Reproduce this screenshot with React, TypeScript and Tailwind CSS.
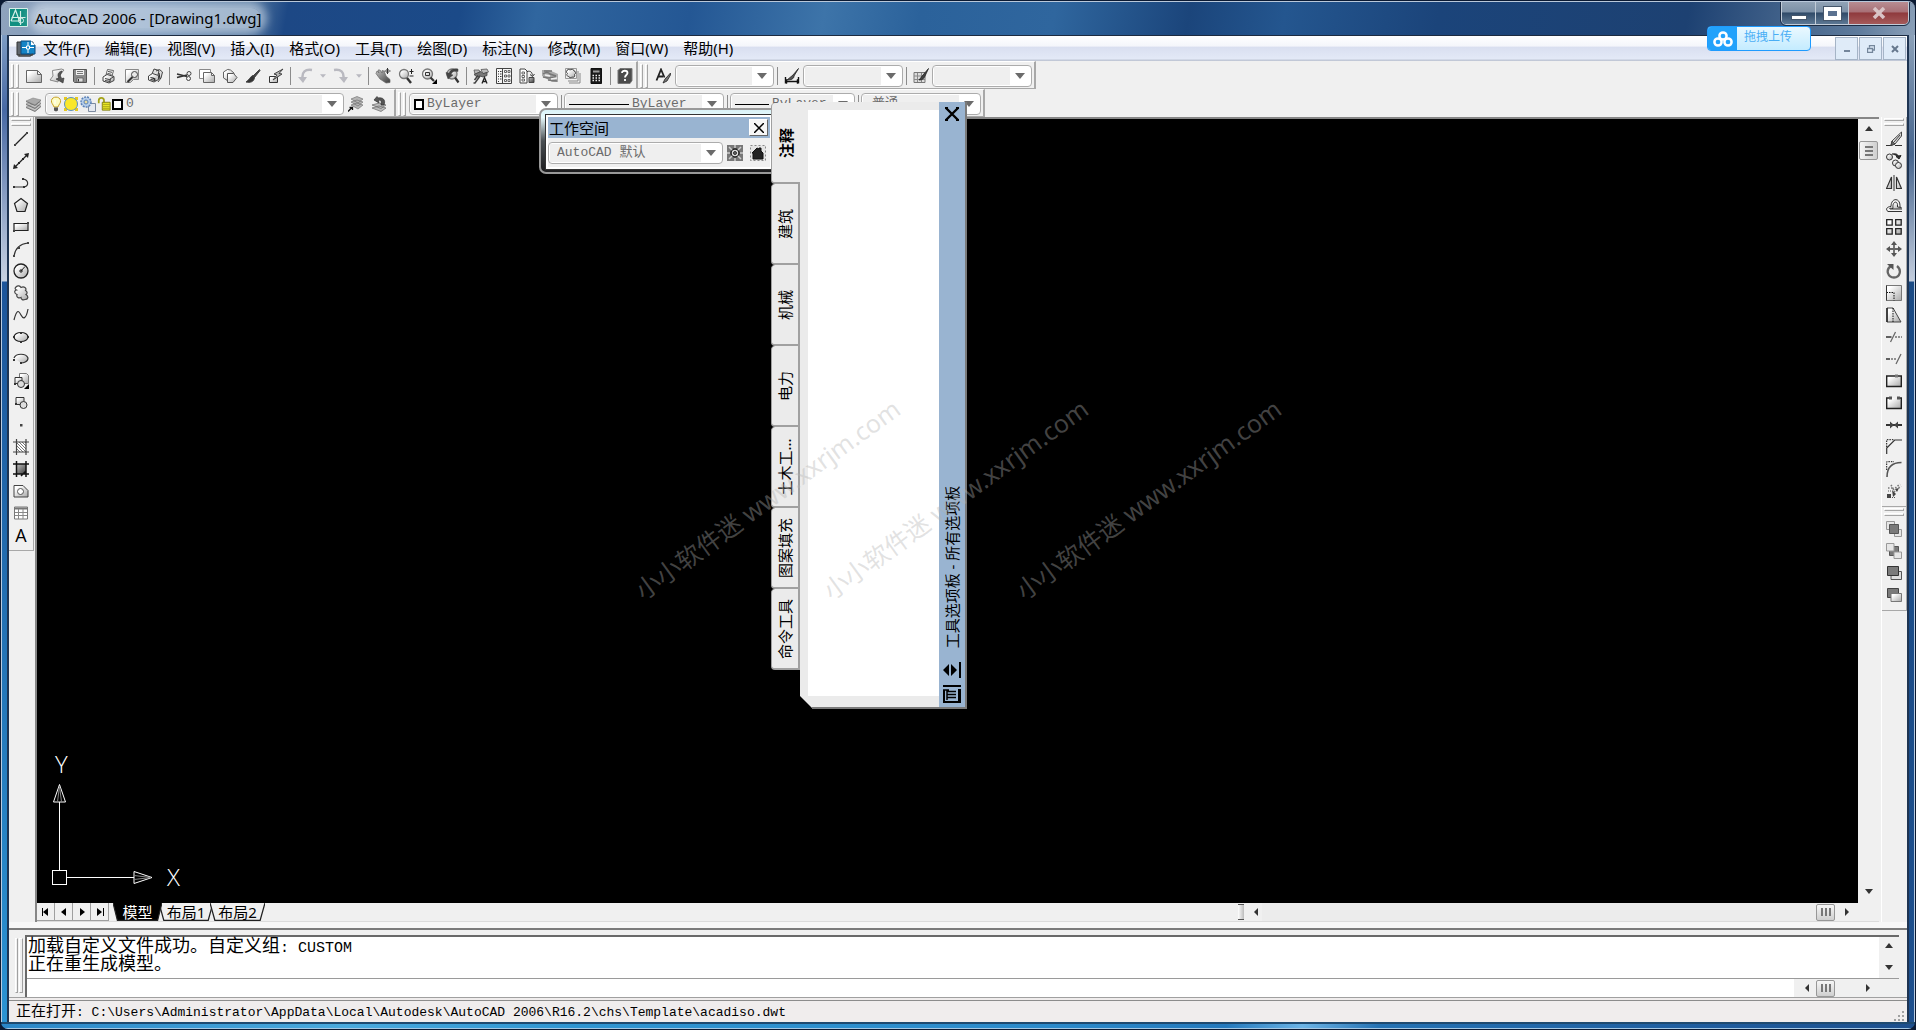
import type { ReactNode } from "react";

const ui = "font-['Noto_Sans','Noto_Sans_CJK_SC',sans-serif]";
const mono = "font-['Liberation_Mono','Noto_Sans_CJK_SC',monospace]";

function Defs() {
  return (
    <svg className="absolute h-0 w-0" aria-hidden="true">
      <defs>
        <linearGradient id="lg" x1="0" y1="0" x2="1" y2="1">
          <stop offset="0.2" stopColor="#ffffff" />
          <stop offset="1" stopColor="#a8a8a8" />
        </linearGradient>
        <linearGradient id="dg" x1="0" y1="0" x2="1" y2="1">
          <stop offset="0" stopColor="#c4c4c4" />
          <stop offset="1" stopColor="#3a3a3a" />
        </linearGradient>
        <pattern id="hatch" width="3" height="3" patternUnits="userSpaceOnUse">
          <path d="M0 0l3 3" stroke="#555" strokeWidth=".8" />
        </pattern>
      </defs>
    </svg>
  );
}

function Ic({ children, className = "h-4 w-4" }: { children: ReactNode; className?: string }) {
  return (
    <svg viewBox="0 0 16 16" fill="none" stroke="#444" strokeWidth="1" className={className} aria-hidden="true">
      {children}
    </svg>
  );
}

const LG = "url(#lg)";
const DG = "url(#dg)";

const icons: Record<string, ReactNode> = {
  新建: <path d="M1 2.500h10.500l4 4V14.500H.5V2.500zM11.500 2.500v4h4" fill={LG} stroke="#666" />,
  打开: (
    <>
      <path d="M3.500 2.500l9-1.500 2.500 1-5 6-1 6-8-2 3-4z" fill={LG} stroke="#888" />
      <path d="M13 3c-4 1-5 4-3 7l-3 1 7 4 1-5-2 .5c-2-2-2-4 0-6.500z" fill="#555" stroke="#333" strokeWidth=".6" />
    </>
  ),
  保存: (
    <>
      <path d="M1.500 1.500h13v13H2.500l-1-1z" fill="#8a8a8a" stroke="#555" />
      <path d="M4 2h8v5H4z" fill="#eee" stroke="none" />
      <path d="M5 3.500h6M5 5.500h6" stroke="#777" />
      <path d="M5 10h6v4H5z" fill="#ddd" stroke="#555" strokeWidth=".7" />
      <path d="M6.500 11v2.500" stroke="#333" />
    </>
  ),
  打印: (
    <>
      <path d="M5 7l1.500-5.500 6 1L11 8" fill="#fff" stroke="#666" />
      <path d="M2 9l4-2.500 7 2v4L8 15l-6-2z" fill={LG} />
      <path d="M4 10.500l6 1.500M4 12.500l5 1M13 8.500L9 11v3.500M7 3.500l4 .8M6.500 5.500l4 .8" />
    </>
  ),
  打印预览: (
    <>
      <path d="M1.500 1.500h13v10h-5l-3 3h-5z" fill={LG} stroke="#888" />
      <circle cx="10.500" cy="6.500" r="3" fill="#e8e8e8" stroke="#444" />
      <path d="M8.500 9L3.500 14" stroke="#333" strokeWidth="2" />
    </>
  ),
  发布: (
    <>
      <path d="M5 6l2-5 5 1.500L11 7M9 3l3.500-1.500L15.500 4 14 10l-3 4" fill="#ddd" />
      <path d="M1.500 8l4-2.500 6 2v4L7 14l-5.500-2z" fill={LG} />
      <path d="M3.500 9.500l5 1.500M3.500 11.500l5 1M8 12l-2-2.500M12 5l1 6" stroke="#222" />
    </>
  ),
  剪切: (
    <>
      <path d="M1 6l10 2.500M1 9.500l10-2.500" stroke="#333" strokeWidth="1.500" />
      <circle cx="13" cy="5.500" r="2" />
      <circle cx="12.500" cy="10.500" r="2" />
    </>
  ),
  复制: (
    <>
      <path d="M.5 1.500h11v9H.5z" fill="#fff" stroke="#888" />
      <path d="M4.500 4.500h8l3 3v7h-11zM12.500 4.500v3h3" fill={LG} stroke="#666" />
    </>
  ),
  粘贴: (
    <>
      <path d="M2 3.500h2l2-2.500 3 2.500 2 1v3M5 12.500L1.500 9z" fill="#ccc" stroke="#888" />
      <path d="M1.500 4l4-2.500 3 .5L12 5v5l-4 4-6.500-4z" fill={LG} stroke="#666" />
      <path d="M5.500 5.500h6l3.500 4-4 5H5.500z" fill={LG} stroke="#555" />
    </>
  ),
  特性匹配: (
    <>
      <path d="M14.500 1.500L8 8l1.500 1.500 5.500-7z" fill="#444" />
      <path d="M8 7.500c-3 1-3 4-7 6.500 4 1 8 0 8.500-4.500z" fill="#333" />
    </>
  ),
  块编辑器: (
    <>
      <path d="M1.500 8.500h8v6h-8z" fill="url(#lg)" stroke="#333" />
      <path d="M15 1L6 6l3 1-4 5 9-6-3-.5z" fill="#bbb" stroke="#444" />
    </>
  ),
  放弃: (
    <>
      <path d="M15 2C8 1 5 4 5.500 10" stroke="#b9b9c0" strokeWidth="2.500" />
      <path d="M1 9h9l-4 6z" fill="#b9b9c0" stroke="none" />
    </>
  ),
  重做: (
    <>
      <path d="M1 2c7-1 10 2 9.500 8" stroke="#b9b9c0" strokeWidth="2.500" />
      <path d="M6 9h9l-4 6z" fill="#b9b9c0" stroke="none" />
    </>
  ),
  实时平移: (
    <>
      <path d="M1 5.500L2 3l2 2-1-3h2l2 3V2.500l2 .5 2 5 4 3.500v3L11 15 5 11z" fill={DG} stroke="#666" strokeWidth=".7" />
      <path d="M12.500 0v6M9.500 3h6M11.500 1.500l1-1 1 1M11.500 4.500l1 1 1-1" stroke="#333" />
    </>
  ),
  实时缩放: (
    <>
      <circle cx="6" cy="6" r="4.500" fill={LG} stroke="#777" strokeWidth="1.300" />
      <path d="M9 10l4 5" stroke="#333" strokeWidth="2.400" />
      <path d="M13.500 1v5M11.500 3.500h4M11.500 8h4" stroke="#222" />
    </>
  ),
  窗口缩放: (
    <>
      <circle cx="6.500" cy="6" r="5" fill={LG} stroke="#777" strokeWidth="1.300" />
      <path d="M4.500 4.500h4v3h-4z" stroke="#333" />
      <path d="M9.500 9.500l3.500 3.500" stroke="#333" strokeWidth="2.200" />
      <path d="M16 11v5h-5z" fill="#000" stroke="none" />
    </>
  ),
  缩放上一个: (
    <>
      <circle cx="8" cy="6" r="5" fill={LG} stroke="#777" strokeWidth="1.300" />
      <path d="M11 9.500l3.500 5" stroke="#333" strokeWidth="2.200" />
      <path d="M14 1C9 0 6 2 5 5L2 4.500 4 11l5-4-2-.5c1-3 3-4 7-3z" fill="#444" strokeWidth=".5" />
    </>
  ),
  特性: (
    <>
      <path d="M1 2h5l1 2-5 2zM8 1.500l6-.5 1.500 3L10 6z" fill="#bbb" stroke="#555" strokeWidth=".8" />
      <path d="M1 6.500l7-3 2 2 4-1v3l-4 1.500-3-1-3 1z" fill="#777" stroke="#444" strokeWidth=".8" />
      <path d="M7 8l-5 7H.5M5 7.500L1.500 12" stroke="#444" strokeWidth="1.500" />
      <path d="M9 15.500l2.500-6 2.500 6M10 13.500h3" stroke="#222" strokeWidth="1.300" />
    </>
  ),
  设计中心: (
    <>
      <path d="M.5.5h15v15H.5z" fill="#f6f6f6" stroke="#444" />
      <path d="M6.500 1v14" />
      <path d="M2 3.500h1M4 3.500h1.500M2 6h1M4 6h1.500M2 8.500h1M4 8.500h1.500M2 11h1M4 11h1.500M2 13.500h1" stroke="#333" />
      <path d="M8.500 2.500h2v2h-2zM12 2.500h2v2h-2zM8.500 7h2v2h-2zM12 7h2v2h-2zM8.500 11.500h2v2h-2zM12 11.500h2v2h-2z" stroke="#666" />
    </>
  ),
  工具选项板: (
    <>
      <path d="M1 1h5l2 2v12H1z" fill="#fff" stroke="#444" />
      <path d="M3 4h2.500v2H3zM3 7.500h2.500v2H3zM3 11h2.500v2H3z" stroke="#666" />
      <path d="M8 3.500c4-1 5 1 5.500 4M11 6.500l2.500 2 2-2.500" stroke="#333" />
      <path d="M10 9.500h5v5h-5z" fill={DG} />
    </>
  ),
  图纸集: (
    <>
      <path d="M0 2h7l9 4v8H10L0 8z" fill="#aaa" stroke="none" />
      <path d="M1 6c3-2 5-2 7 0l6 2M2 3h8M1 9l5 1 8-1M6 12l9 1" stroke="#777" strokeWidth="1.500" />
      <path d="M3 7l5 1M9 11l6-1" stroke="#eee" strokeWidth="1.500" />
    </>
  ),
  标记集: (
    <>
      <path d="M4 15h11V5M3 13h10V3" stroke="#888" />
      <path d="M.5.5h11v10H.5z" fill="#eee" stroke="#999" />
      <path d="M2 3c0-2 2-2 3-1 1-1 4-1 4 1 2 0 2 3 .5 3.500 1 2-1 3.500-2.500 2.500-1 1-3 1-3-.5-2 0-3-2-1.500-3C1.500 5 1 3 2 3z" fill={LG} stroke="#444" />
    </>
  ),
  计算器: (
    <>
      <path d="M3 .5h10.500v15H3z" fill="#1a1a1a" stroke="#111" />
      <path d="M5 2.500h6.500v2H5z" fill="#9a9a9a" stroke="none" />
      <path d="M4.500 7.500h8M4.500 10h8M4.500 12.500h8" stroke="#eee" strokeWidth="1.300" strokeDasharray="1.500 1.500" />
    </>
  ),
  帮助: (
    <>
      <path d="M1 2.500L3 .5h12v12l-2 3H1z" fill="#4b4b4b" stroke="#777" />
      <path d="M5 5c0-3 5.500-3 5.500 0 0 2-2.500 2-2.500 4.500M8 11v2" stroke="#fff" strokeWidth="1.800" />
    </>
  ),
  文字样式: (
    <>
      <path d="M1.500 12.500L6 1.500l3.500 8M3 8.500h5" stroke="#222" strokeWidth="1.800" />
      <path d="M15.500 5L11 10l-1 1-2 4 4-2 4-7z" fill="#777" stroke="#222" strokeWidth=".8" />
    </>
  ),
  标注样式: (
    <>
      <path d="M1 13.500h14M1.500 9v6.500M14.500 9v6.500M3 11.500l-1.500 2L3 15.500M13 11.500l1.500 2-1.500 2" stroke="#111" strokeWidth="1.400" />
      <path d="M14.500.5L9 7l-6 5c4 0 7-1 7-4z" fill="#555" stroke="#222" strokeWidth=".8" />
    </>
  ),
  表格样式: (
    <>
      <path d="M1 4.500h11v10H1z" fill="#ddd" stroke="#777" />
      <path d="M1 8h11M1 11.500h11M4.500 5v9M8.500 5v9" stroke="#888" />
      <path d="M15.500.5L10 7l-4 5c4 0 5-2 6-4z" fill="#444" stroke="#222" strokeWidth=".8" />
    </>
  ),
  图层特性: (
    <>
      <path d="M0 11l7-3 8 2-6 5zM0 8l7-3 8 2-6 5z" fill="#c4c4c4" stroke="#888" strokeWidth=".6" />
      <path d="M0 5l7-3 8 2-6 5z" fill="#aaa" stroke="#888" strokeWidth=".6" />
      <path d="M0 5.500l9 4 6-5M0 8.500l9 4 6-5M0 11.500l9 4 6-5" stroke="#666" strokeWidth=".8" />
    </>
  ),
  置为当前: (
    <>
      <path d="M3 9l6-2 6 2-5 4zM3 6l6-2 6 2-5 4zM3 3l6-2.500L15 3l-5 4z" fill="#b4b4b4" stroke="#666" strokeWidth=".6" />
      <path d="M0 15.500l4-4M1.500 11.500H4.500V14" stroke="#111" strokeWidth="1.300" />
    </>
  ),
  上一个图层: (
    <>
      <path d="M1 12l7-2 7 2-5 3.500zM1 9l7-2 7 2-5 3.500z" fill="#bbb" stroke="#666" strokeWidth=".7" />
      <path d="M13 9c2-5-1-8-6-7L6 .5 3 4l5 3-.5-2.500c3-1 3 1 2.500 4.500z" fill="#555" stroke="#333" strokeWidth=".7" />
    </>
  ),
  直线: (
    <>
      <path d="M2 14L14 2" stroke="#222" strokeWidth="1.300" />
      <path d="M1 13h2v2H1zM13 1h2v2h-2z" fill="#444" stroke="none" />
    </>
  ),
  构造线: (
    <>
      <path d="M2 14L14 2" stroke="#222" strokeWidth="1.300" />
      <path d="M0 16l1-5 4 4zM16 0l-5 1 4 4zM5 9h2v2H5zM9 5h2v2H9z" fill="#222" stroke="none" />
    </>
  ),
  多段线: (
    <>
      <path d="M1 12h10c5-1 5-7-1-8" stroke="#333" strokeWidth="1.200" />
      <path d="M0 11h2v2H0zM10 11h2v2h-2zM9 3h2v2H9z" fill="#333" stroke="none" />
    </>
  ),
  正多边形: <path d="M8 1.500l6.500 5-2.500 8H4l-2.500-8z" fill={LG} stroke="#222" strokeWidth="1.200" />,
  矩形: (
    <>
      <path d="M1 4.500h14v7H1z" fill={LG} stroke="#222" strokeWidth="1.200" />
      <path d="M0 11h2v2H0zM14 3h2v2h-2z" fill="#444" stroke="none" />
    </>
  ),
  圆弧: (
    <>
      <path d="M1 15C2 9 5 3 15 2" stroke="#333" strokeWidth="1.200" />
      <path d="M0 14h2v2H0zM5 6h2v2H5zM14 1h2v2h-2z" fill="#444" stroke="none" />
    </>
  ),
  圆: (
    <>
      <circle cx="8" cy="8" r="7" fill={LG} stroke="#222" strokeWidth="1.300" />
      <path d="M8 8l4-4.500M7 7h2v2H7z" stroke="#222" />
    </>
  ),
  修订云线: (
    <path
      d="M3 2c2-2 4-1 5 .5C11 1 14 3 12.500 5.500c2 1 2 3 .5 4 3 2 2 5-1 5-2 1-4 0-4-2-2 1-5 0-4-3-3-1-3-4-.5-4.500C1.500 4 2 3 3 2z"
      fill={LG}
      stroke="#444"
      strokeWidth="1.200"
    />
  ),
  样条曲线: <path d="M1 13C4 1 6 4 8 8s5 5 7-6" stroke="#333" strokeWidth="1.200" />,
  椭圆: (
    <>
      <ellipse cx="8" cy="8" rx="7" ry="4.500" fill={LG} stroke="#222" strokeWidth="1.200" />
      <path d="M0 7h2v2H0zM14 7h2v2h-2zM7 3h2v2H7zM7 12h2v2H7z" fill="#333" stroke="none" />
    </>
  ),
  椭圆弧: (
    <>
      <path d="M1 7c2-5 12-5 14 0 0 4-5 5-7 5" fill={LG} stroke="#333" strokeWidth="1.200" />
      <path d="M0 8h2v2H0zM7 11h2v2H7z" fill="#333" stroke="none" />
    </>
  ),
  插入块: (
    <>
      <path d="M6.500.5h7l2 2v8h-9z" fill={LG} stroke="#777" />
      <path d="M2 4.500h7v6H2z" fill={LG} stroke="#333" />
      <circle cx="8" cy="11" r="3.500" fill="#ddd" stroke="#333" />
      <path d="M1 10h2v2H1z" fill="#333" stroke="none" />
      <path d="M16 11v5h-5z" fill="#000" stroke="none" />
    </>
  ),
  创建块: (
    <>
      <path d="M3 2.500h8v7H3z" fill={LG} stroke="#333" />
      <circle cx="10.500" cy="10" r="3.500" fill="#ddd" stroke="#333" />
      <path d="M2 8h2v2H2z" fill="#333" stroke="none" />
    </>
  ),
  点: <path d="M7 7h2.500v2.500H7z" fill="#444" stroke="none" />,
  图案填充: (
    <>
      <path d="M3 3h10v10H3z" fill="#fff" stroke="none" />
      <path d="M3 3h10v10H3z" fill="url(#hatch)" stroke="none" />
      <path d="M0 3h16M0 13h16M3.500 0v16M13 0v16" stroke="#444" strokeWidth="1.200" />
    </>
  ),
  渐变色: (
    <>
      <path d="M3 3h10v10H3z" fill="url(#dg)" stroke="none" />
      <path d="M0 3h16M0 13h16M3.500 0v16M13 0v16M8 15l5-5" stroke="#111" strokeWidth="1.500" />
    </>
  ),
  面域: (
    <>
      <path d="M1 2.500h9l5 5v6.500H1z" fill={LG} stroke="#444" />
      <circle cx="7.500" cy="8.500" r="3" fill="#fff" stroke="#555" />
    </>
  ),
  表格: (
    <>
      <path d="M1.500 2h13v12h-13z" fill="#fff" stroke="#777" />
      <path d="M1.500 3.500h13" stroke="#777" strokeWidth="2" />
      <path d="M2 7.500h12M2 10.500h12M5.500 4v10M10 4v10" stroke="#888" />
    </>
  ),
  删除: (
    <>
      <path d="M0 14.500h5M9 14.500h7" stroke="#333" />
      <path d="M15.500 1v4L9 13l-4 1.500 1-4.500z" fill={LG} stroke="#444" />
      <path d="M5 14.500l1-4.500 3 3zM8 11l6-7" stroke="#444" fill="#666" />
    </>
  ),
  复制对象: (
    <>
      <circle cx="3.500" cy="4" r="3" fill={LG} stroke="#333" />
      <circle cx="9.500" cy="10" r="3" fill={LG} stroke="#333" />
      <circle cx="12.500" cy="12.500" r="3" fill={LG} stroke="#333" />
      <path d="M6 1c4-.5 6 0 6.500 3M10 3.500l3 2.500 2-3.500z" stroke="#222" fill="#333" />
    </>
  ),
  镜像: (
    <>
      <path d="M5.500 2v11.500H.5z" fill={LG} stroke="#333" strokeWidth="1.200" />
      <path d="M10.500 2v11.500h5z" fill={LG} stroke="#333" strokeWidth="1.200" />
      <path d="M8 0v16" stroke="#333" />
    </>
  ),
  偏移: (
    <>
      <path d="M16 14.500H2c-3-2-1-5 3-5 0-9 9-9 9-1v2" stroke="#333" />
      <path d="M16 12H4c-1-1 0-1 3-.5-1-7 4-8 4.500-4v2.500l4 .5" stroke="#333" fill={LG} />
    </>
  ),
  阵列: <path d="M.7.7h5.500v5.500H.7zM9.700.7h5.500v5.500H9.700zM.7 9.700h5.500v5.500H.7zM9.700 9.700h5.500v5.500H9.700z" fill={LG} stroke="#222" strokeWidth="1.300" />,
  移动: (
    <>
      <path d="M8 2v12M2 8h12" stroke="#666" strokeWidth="1.800" />
      <path d="M8 0l3 4H5zM8 16l3-4H5zM0 8l4-3v6zM16 8l-4-3v6z" fill="#555" stroke="none" />
    </>
  ),
  旋转: (
    <>
      <path d="M5 3C-1 7 2 14.500 8 14.500S16 7 11 3" stroke="#666" strokeWidth="2.300" />
      <path d="M1 1h6.500v6z" fill="#555" stroke="none" />
    </>
  ),
  缩放对象: (
    <>
      <path d="M.5.5h15v15H.5z" fill={LG} stroke="#777" />
      <path d="M.5 7.500h7.500v8" stroke="#111" strokeDasharray="1.500 1" />
      <path d="M.5.5v15" stroke="#333" />
    </>
  ),
  拉伸: (
    <>
      <path d="M1 1h6l8 14H1z" fill={LG} stroke="#444" />
      <path d="M7 1v14" stroke="#111" strokeDasharray="1.500 1" />
      <path d="M1 1v14" stroke="#222" strokeWidth="1.500" />
    </>
  ),
  修剪: (
    <>
      <path d="M0 8h5.500" stroke="#222" strokeWidth="1.400" />
      <path d="M9 8h7" stroke="#333" strokeDasharray="2 1" />
      <path d="M4.500 13l5-10" stroke="#666" strokeWidth="1.300" />
    </>
  ),
  延伸: (
    <>
      <path d="M0 8h4" stroke="#222" strokeWidth="1.400" />
      <path d="M5 8h6" stroke="#333" strokeDasharray="2 1" />
      <path d="M10 13l5-10" stroke="#666" strokeWidth="1.300" />
    </>
  ),
  打断于点: (
    <>
      <path d="M.7 3h14.600v10.500H.7z" fill={LG} stroke="#222" strokeWidth="1.400" />
      <path d="M9 1.500h3v3H9z" fill="#777" stroke="none" />
    </>
  ),
  打断: (
    <>
      <path d="M1 3h14v10.500H1z" fill={LG} stroke="none" />
      <path d="M4 3H.7v10.500h14.600V3H12" stroke="#222" strokeWidth="1.400" />
      <path d="M3 1.500h3v3H3zM11 1.500h3v3h-3z" fill="#555" stroke="none" />
    </>
  ),
  合并: (
    <>
      <path d="M0 8h16" stroke="#333" strokeWidth="2" />
      <path d="M4 4.500L8 8l-4 3.500zM12 4.500L8 8l4 3.500z" fill="#444" stroke="none" />
    </>
  ),
  倒角: (
    <>
      <path d="M.7 15V9l8-8H16" stroke="#333" strokeWidth="1.200" />
      <path d="M.7 8V.7H8" stroke="#111" strokeDasharray="1.500 1" />
    </>
  ),
  圆角: (
    <>
      <path d="M1 16C1 6 6 1.500 15.500 1.500" stroke="#555" strokeWidth="1.600" />
      <path d="M.7 9V.7H8" stroke="#111" strokeDasharray="1.500 1" />
    </>
  ),
  分解: (
    <>
      <path d="M7 7l7-6M8 9l7-6M2 5h6M5 2l3 5" stroke="#777" strokeDasharray="1.500 1.500" strokeWidth="1.600" />
      <path d="M1 11h4v4H1zM6 7l4 4-3 3zM9 6l4-1-2 4z" fill="#444" stroke="none" />
      <path d="M6 14.500h4M2 8h4" stroke="#555" strokeDasharray="1 1" />
    </>
  ),
  前置: (
    <>
      <path d="M.5.5h8v8h-8zM8.500 8.500h7v7h-7z" fill="#e6e6e6" stroke="#999" />
      <path d="M3.500 3.500h9v9h-9z" fill="#7a7a7a" stroke="#555" />
    </>
  ),
  后置: (
    <>
      <path d="M3.500 3.500h9v9h-9z" fill="#7a7a7a" stroke="#555" />
      <path d="M.5.5h7.500v7.500H.5zM8 9h7.500v6.500H8z" fill="#e6e6e6" stroke="#999" />
    </>
  ),
  置于对象之上: (
    <>
      <path d="M5 6.500h10.500v8H5z" fill="#ddd" stroke="#555" />
      <path d="M1.500 1.500h11v9h-11z" fill="#7a7a7a" stroke="#333" />
    </>
  ),
  置于对象之下: (
    <>
      <path d="M1.500 1.500h11v9h-11z" fill="#7a7a7a" stroke="#444" />
      <path d="M5 6.500h10.500v8H5z" fill={LG} stroke="#777" />
    </>
  ),
  工作空间设置: (
    <>
      <path d="M0 0h16v16H0z" fill="#777" stroke="none" />
      <circle cx="8" cy="8" r="4" fill="#ddd" stroke="#222" strokeWidth="1.500" />
      <circle cx="8" cy="8" r="1.500" fill="#666" stroke="#333" />
      <path d="M8 0v3M8 13v3M0 8h3M13 8h3M2 2l3 3M14 2l-3 3M2 14l3-3M14 14l-3-3" stroke="#ccc" strokeWidth="1.500" />
    </>
  ),
  我的工作空间: (
    <>
      <path d="M.5.5h15v15H.5z" stroke="#888" strokeDasharray="2 2" fill="#e4e4e4" />
      <path d="M3 14V8H2l5-5 2 1V3h2v3l2 2v6z" fill="#222" stroke="#111" />
    </>
  ),
};

function Tool({ name }: { name: string }) {
  return (
    <button type="button" aria-label={name} className="flex h-[22px] w-[23px] shrink-0 items-center justify-center">
      <Ic>{icons[name]}</Ic>
    </button>
  );
}

function Sep() {
  return (
    <div className="flex w-[6px] shrink-0 justify-center">
      <div className="h-[18px] w-px bg-[#8c8c8c]" />
    </div>
  );
}

function Grip() {
  return (
    <div className="mr-[3px] ml-[2px] flex h-[24px] shrink-0 gap-[2px]">
      <div className="w-[3px] border border-t-white border-r-[#a5a5a5] border-b-[#a5a5a5] border-l-white" />
      <div className="w-[3px] border border-t-white border-r-[#a5a5a5] border-b-[#a5a5a5] border-l-white" />
    </div>
  );
}

function GripH() {
  return (
    <div className="mt-px flex w-[20px] flex-col gap-[2px]">
      <div className="h-[3px] border border-t-white border-r-[#a5a5a5] border-b-[#a5a5a5] border-l-white" />
      <div className="h-[3px] border border-t-white border-r-[#a5a5a5] border-b-[#a5a5a5] border-l-white" />
    </div>
  );
}

function Bar({ children }: { children: ReactNode }) {
  return (
    <div className="flex h-full items-center border-t border-r-2 border-b border-t-white border-r-[#a8a8a8] border-b-[#a8a8a8] pt-[2px]">
      <Grip />
      {children}
    </div>
  );
}

function Tri({ className = "h-[6px] w-[10px] fill-[#6b6b6b]", d = "M0 0h10L5 6z" }: { className?: string; d?: string }) {
  return (
    <svg viewBox="0 0 10 6" className={className} aria-hidden="true">
      <path d={d} />
    </svg>
  );
}

function Combo({ label, value = "", width, lead }: { label: string; value?: string; width: string; lead?: ReactNode }) {
  return (
    <div className={`flex h-[22px] shrink-0 items-stretch rounded-sm border border-[#acacac] bg-white p-px ${width}`}>
      <div className="flex min-w-0 flex-1 items-center bg-[#efefef] pl-[3px]">
        {lead}
        <select aria-label={label} className={`min-w-0 flex-1 appearance-none bg-transparent pl-[3px] text-[13px] text-[#6b6b6b] ${mono}`}>
          <option>{value}</option>
        </select>
      </div>
      <span className="flex w-[20px] items-center justify-center">
        <Tri />
      </span>
    </div>
  );
}

function LayerStates() {
  return (
    <div className="flex items-center gap-px">
      <svg viewBox="0 0 12 16" className="h-4 w-3" fill="none" aria-hidden="true">
        <path d="M4 11C3 8 1 7 1.500 4.500 2 0 10 0 10.500 4.500 11 7 9 8 8 11z" fill="#fdfcc4" stroke="#c9a227" />
        <path d="M4 11.500h4v3l-2 1-2-1z" fill="#555" />
        <path d="M5 4v4" stroke="#fff" />
      </svg>
      <svg viewBox="0 0 16 16" className="h-4 w-4" fill="none" aria-hidden="true">
        <path d="M1 1h3v3H1zM12 1h3v3h-3zM1 12h3v3H1zM12 12h3v3h-3z" fill="#e6c81e" />
        <circle cx="8" cy="8" r="6.500" fill="#fae72a" stroke="#5a8fbe" />
      </svg>
      <svg viewBox="0 0 16 16" className="h-4 w-4" fill="none" aria-hidden="true">
        <path d="M8.500 7.500h7v8h-7z" fill="#e4e8f0" stroke="#7d8ba0" />
        <circle cx="6" cy="6" r="5" fill="#b5cdea" stroke="#5b82b8" strokeWidth="1.500" strokeDasharray="2 1" />
        <circle cx="6" cy="6" r="2" fill="#e9dca0" stroke="#5b82b8" />
      </svg>
      <svg viewBox="0 0 16 16" className="h-4 w-[14px]" fill="none" aria-hidden="true">
        <path d="M2 7V4c0-4 6-4 6 0v3" stroke="#a5a31a" strokeWidth="2" />
        <path d="M6 6h9v9H6z" fill="#e8e524" stroke="#77750f" />
        <path d="M6 8.500h9M6 11h9M6 13h9" stroke="#a8a518" />
      </svg>
      <span className="h-[11px] w-[11px] border-2 border-black bg-white" />
    </div>
  );
}

const menus = ["文件(F)", "编辑(E)", "视图(V)", "插入(I)", "格式(O)", "工具(T)", "绘图(D)", "标注(N)", "修改(M)", "窗口(W)", "帮助(H)"];

const drawTools = [
  "直线", "构造线", "多段线", "正多边形", "矩形", "圆弧", "圆", "修订云线", "样条曲线", "椭圆",
  "椭圆弧", "插入块", "创建块", "点", "图案填充", "渐变色", "面域", "表格",
];
const modifyTools = [
  "删除", "复制对象", "镜像", "偏移", "阵列", "移动", "旋转", "缩放对象", "拉伸",
  "修剪", "延伸", "打断于点", "打断", "合并", "倒角", "圆角", "分解",
];
const orderTools = ["前置", "后置", "置于对象之上", "置于对象之下"];
const paletteTabs = ["注释", "建筑", "机械", "电力", "土木工...", "图案填充", "命令工具"];

function TitleBar() {
  return (
    <header className={`flex h-[33px] shrink-0 items-start bg-[linear-gradient(100deg,#8fa3bd_0%,#6f8fb5_8%,#54779f_13%,#1d4885_15%,#1b4a88_24%,#30669f_28%,#245794_36%,#3d74a9_43%,#2b629b_48%,#2f669e_55%,#1b457b_62%,#24568f_67%,#1b447a_75%,#1d4172_88%,#5e7b9c_97%,#8ba0b8_100%)] ${ui}`}>
      <div className="flex h-[31px] flex-1 items-center gap-[7px] pl-2">
        <svg viewBox="0 0 19 19" className="h-[19px] w-[19px]" fill="none" aria-hidden="true">
          <path d="M.5.5h18v18H.5z" fill="#118f80" stroke="#d8efe9" />
          <path d="M2 13L6.500 2l4 11M2.500 9.500h14M11.500 3v14M2 13h10" stroke="#d6efe8" strokeWidth="1.200" />
          <circle cx="12" cy="12.500" r="2.500" stroke="#d6efe8" />
        </svg>
        <h1 className="rounded-full bg-[rgba(226,235,244,0.55)] text-[15px] leading-[20px] whitespace-nowrap text-black shadow-[0_0_8px_6px_rgba(226,235,244,0.55)]">
          AutoCAD 2006 - [Drawing1.dwg]
        </h1>
      </div>
      <div className="mr-[6px] flex h-[23px] overflow-hidden rounded-b-[5px] border border-t-0 border-[#c2ccd8] outline outline-[#1b2c44]">
        <button type="button" aria-label="最小化" className="flex w-[34px] items-end justify-center border-r border-[#c2ccd8] bg-[linear-gradient(#91a3b6_0%,#7c90a6_45%,#304a68_50%,#5d7894_100%)] pb-[4px]">
          <span className="h-[5px] w-[16px] border border-[#45566b] bg-white" />
        </button>
        <button type="button" aria-label="最大化" className="flex w-[33px] items-center justify-center border-r border-[#c2ccd8] bg-[linear-gradient(#91a3b6_0%,#7c90a6_45%,#304a68_50%,#5d7894_100%)]">
          <span className="h-[13px] w-[17px] border-4 border-white bg-[#5b7290] outline outline-[#45566b]" />
        </button>
        <button type="button" aria-label="关闭" className="flex w-[59px] items-center justify-center bg-[linear-gradient(#b88d92_0%,#a87076_45%,#8f3a3d_50%,#a55a5a_100%)]">
          <svg viewBox="0 0 14 12" className="h-3 w-[14px]" aria-hidden="true">
            <path d="M2 1l10 10M12 1L2 11" stroke="#d9c3c6" strokeWidth="3.500" />
          </svg>
        </button>
      </div>
    </header>
  );
}

function MenuBar() {
  const box = "flex h-[23px] w-[23px] items-center justify-center border border-[#a5b4c6] bg-[#dfebf8]";
  return (
    <nav className={`flex h-[26px] shrink-0 items-center border-t border-[#1d2b40] bg-[linear-gradient(#ffffff_0%,#f4f6fb_40%,#d9dff0_45%,#e3e9f7_90%,#b9c0cf_100%)] ${ui}`}>
      <svg viewBox="0 0 20 18" className="mr-[7px] ml-[7px] h-[18px] w-5" fill="none" aria-hidden="true">
        <path d="M1 2h16v13H1z" fill="#5f666e" stroke="#333" />
        <path d="M5 1h10l4 4v9H5z" fill="#1584c6" stroke="#0d4d80" />
        <path d="M12 2v11M6 7.500h12" stroke="#fff" />
        <path d="M10.500 6h3v3h-3z" fill="#1584c6" stroke="#fff" />
        <path d="M3 14v2h11l3-2" stroke="#444" strokeWidth="1.500" />
        <path d="M15 1v4h4z" fill="#fff" />
      </svg>
      <div className="flex flex-1 gap-[15px] pb-[2px]">
        {menus.map((m) => (
          <button key={m} type="button" className="text-[15px] leading-[22px] whitespace-nowrap text-black">
            {m}
          </button>
        ))}
      </div>
      <div className="mr-px flex gap-px">
        <button type="button" aria-label="最小化图形" className={box}>
          <span className="mt-1 h-[2px] w-[6px] bg-[#74869b]" />
        </button>
        <button type="button" aria-label="还原图形" className={box}>
          <svg viewBox="0 0 8 8" className="h-2 w-2" fill="none" stroke="#74869b" aria-hidden="true">
            <path d="M2.500 2.500v-2h5v4.500h-2M.5 3.500h5v4h-5z" strokeWidth="1.300" />
          </svg>
        </button>
        <button type="button" aria-label="关闭图形" className={box}>
          <svg viewBox="0 0 8 8" className="h-2 w-2" stroke="#66788e" aria-hidden="true">
            <path d="M1 1l6 6M7 1L1 7" strokeWidth="2" />
          </svg>
        </button>
      </div>
    </nav>
  );
}

function Toolbars() {
  const t = (names: string[]) => names.map((n) => <Tool key={n} name={n} />);
  const drop = (label: string) => (
    <button type="button" aria-label={label} className="flex w-[13px] justify-center">
      <Tri className="h-1 w-[6px] fill-[#b9b9c0]" />
    </button>
  );
  return (
    <div className="shrink-0 bg-[#f0f0f0]">
      <div className="flex h-[28px]">
        <Bar>
          <div className="flex items-center">
            {t(["新建", "打开", "保存"])}
            <Sep />
            {t(["打印", "打印预览", "发布"])}
            <Sep />
            {t(["剪切", "复制", "粘贴", "特性匹配", "块编辑器"])}
            <Sep />
            {t(["放弃"])}
            {drop("放弃列表")}
            {t(["重做"])}
            {drop("重做列表")}
            <Sep />
            {t(["实时平移", "实时缩放", "窗口缩放", "缩放上一个"])}
            <Sep />
            {t(["特性", "设计中心", "工具选项板", "图纸集", "标记集", "计算器"])}
            <Sep />
            {t(["帮助"])}
          </div>
        </Bar>
        <Bar>
          {t(["文字样式"])}
          <div className="w-px" />
          <Combo label="文字样式" width="w-[99px]" />
          <Sep />
          {t(["标注样式"])}
          <Combo label="标注样式" width="w-[100px]" />
          <Sep />
          {t(["表格样式"])}
          <Combo label="表格样式" width="w-[100px]" />
          <div className="w-[2px]" />
        </Bar>
      </div>
      <div className="flex h-[28px]">
        <Bar>
          {t(["图层特性"])}
          <Combo label="图层" value="0" width="w-[299px]" lead={<LayerStates />} />
          {t(["置为当前", "上一个图层"])}
          <div className="w-[4px]" />
        </Bar>
        <Bar>
          <Combo
            label="颜色"
            value="ByLayer"
            width="w-[149px]"
            lead={<span className="h-[11px] w-[10px] border-2 border-black bg-white" />}
          />
          <Sep />
          <Combo label="线型" value="ByLayer" width="w-[160px]" lead={<span className="h-px w-[60px] bg-black" />} />
          <Sep />
          <Combo label="线宽" value="ByLayer" width="w-[125px]" lead={<span className="h-px w-[34px] bg-black" />} />
          <Sep />
          <Combo label="打印样式" value="普通" width="w-[120px]" lead={<span className="w-[3px]" />} />
          <div className="w-[2px]" />
        </Bar>
      </div>
    </div>
  );
}

function VToolbar({ tools, text }: { tools: string[]; text?: boolean }) {
  return (
    <div className="flex w-[25px] flex-col items-center gap-[2px] border-r border-b border-r-[#a8a8a8] border-b-[#a8a8a8] pb-[4px]">
      <GripH />
      <div className="flex flex-col">
        {tools.map((n) => (
          <Tool key={n} name={n} />
        ))}
        {text && (
          <button type="button" aria-label="多行文字" className="h-[22px] w-[23px] text-center font-['Open_Sans',sans-serif] text-[18px] leading-[20px] font-medium text-black">
            A
          </button>
        )}
      </div>
    </div>
  );
}

const arrowPaths = {
  up: "M0 5l4-5 4 5z",
  down: "M0 1l4 5 4-5z",
  left: "M6 0v8L2 4z",
  right: "M2 0v8l4-4z",
};

function Arrow({ dir, label, className = "" }: { dir: keyof typeof arrowPaths; label: string; className?: string }) {
  return (
    <button type="button" aria-label={label} className={`flex shrink-0 items-center justify-center ${className}`}>
      <svg viewBox="0 0 8 8" className="h-2 w-2 fill-[#333]" aria-hidden="true">
        <path d={arrowPaths[dir]} />
      </svg>
    </button>
  );
}

function ThumbH() {
  return (
    <div className="flex h-[17px] w-[19px] shrink-0 items-center justify-center gap-[2px] rounded-[2px] border border-[#979797] bg-[linear-gradient(#f6f6f6,#cfcfcf)]">
      <span className="h-2 w-[2px] bg-[#777]" />
      <span className="h-2 w-[2px] bg-[#777]" />
      <span className="h-2 w-[2px] bg-[#777]" />
    </div>
  );
}

function Ucs() {
  return (
    <svg viewBox="0 0 140 160" className="absolute bottom-0 left-[10px] h-[160px] w-[140px]" fill="none" stroke="#fff" aria-hidden="true">
      <path d="M5.500 127.500h14v14h-14zM12.500 127V59M20 134.500h67" shapeRendering="crispEdges" />
      <path d="M12.500 41.500l-6 17.500h12zM105 134.500l-18-6v12z" />
      <path d="M12.500 43l-2 16M12.500 43l2 16M104 134.500l-17-2M104 134.500l-17 2" stroke="#888" />
      <text x="8" y="30" fill="#fff" stroke="none" className="font-['Open_Sans',sans-serif] text-[24px] font-light">Y</text>
      <text x="120" y="143" fill="#fff" stroke="none" className="font-['Open_Sans',sans-serif] text-[24px] font-light">X</text>
    </svg>
  );
}

function LayoutTab({ label, active, width }: { label: string; active?: boolean; width: string }) {
  return (
    <button type="button" className={`relative -mr-[3px] h-[18px] text-[15px] leading-[16px] ${width} ${active ? "z-10 text-white" : "text-black"} ${ui}`}>
      <svg viewBox="0 0 56 18" preserveAspectRatio="none" className="absolute inset-0 h-full w-full" aria-hidden="true">
        <path d="M0 0h56l-5 17.500H5z" className={active ? "fill-black" : "fill-[#f0f0f0]"} />
        <path d="M0 0l5 17.500h46L56 0" fill="none" stroke="#222" strokeWidth="1.300" />
      </svg>
      <span className="relative">{label}</span>
    </button>
  );
}

function LayoutRow() {
  const nav = ["M1 1h1v8H1zM7 1v8L2 5z", "M7 1v8L2 5z", "M3 1v8l5-4z", "M2 1v8l5-4zM8 1h1v8H8z"];
  const navNames = ["首个布局", "上一个布局", "下一个布局", "末个布局"];
  return (
    <div className="flex h-[19px] shrink-0 items-start border-b border-[#dcdcdc] bg-[#f0f0f0]">
      {nav.map((d, i) => (
        <button key={navNames[i]} type="button" aria-label={navNames[i]} className="flex h-[18px] w-[18px] items-center justify-center border-r border-b border-[#a0a0a0]">
          <svg viewBox="0 0 10 10" className="h-[10px] w-[10px]" aria-hidden="true">
            <path d={d} />
          </svg>
        </button>
      ))}
      <div className="flex pl-[4px]">
        <LayoutTab label="模型" active width="w-[49px]" />
        <LayoutTab label="布局1" width="w-[54px]" />
        <LayoutTab label="布局2" width="w-[55px]" />
      </div>
      <div className="flex-1" />
      <div className="flex h-[18px] w-[641px] items-center">
        <span className="mr-[6px] h-[16px] w-[6px] border-y border-[#555] bg-[linear-gradient(90deg,#fff,#bbb)]" />
        <Arrow dir="left" label="向左滚动" className="w-[12px]" />
        <div className="flex h-[18px] flex-1 items-center justify-end bg-[#ececec]">
          <ThumbH />
        </div>
        <Arrow dir="right" label="向右滚动" className="w-[23px]" />
        <div className="w-[21px]" />
      </div>
    </div>
  );
}

function CommandPane() {
  return (
    <section className="flex h-[75px] shrink-0 flex-col bg-[#f0f0f0]">
      <div className="h-2 shrink-0 border-b-2 border-[#7b7b7b] bg-[#f7f7f7]" />
      <div className="flex min-h-0 flex-1 pt-[5px]">
        <div className="mt-[3px] mr-[2px] mb-1 ml-[6px] flex gap-px">
          <div className="w-[3px] border border-white border-r-[#a0a0a0] border-b-[#a0a0a0]" />
          <div className="w-[4px] border border-white border-r-[#a0a0a0] border-b-[#a0a0a0]" />
        </div>
        <div className="mr-2 flex min-w-0 flex-1 flex-col border-t-2 border-l-2 border-[#696969]">
          <div className="flex h-[42px] shrink-0 border-b border-[#9a9a9a] bg-white">
            <div className={`min-w-0 flex-1 pt-[2px] pl-px text-[15px] leading-[16px] whitespace-nowrap text-black ${mono}`}>
              <p><span className="text-[18px]">加载自定义文件成功。自定义组</span>: CUSTOM</p>
              <p><span className="text-[18px]">正在重生成模型。</span></p>
            </div>
            <div className="flex w-[20px] flex-col bg-[#f0f0f0]">
              <Arrow dir="up" label="命令向上滚动" className="flex-1" />
              <Arrow dir="down" label="命令向下滚动" className="flex-1" />
            </div>
          </div>
          <div className="flex min-h-0 flex-1">
            <input aria-label="命令行" className={`min-w-0 flex-1 bg-white px-1 text-[15px] outline-none ${mono}`} />
            <div className="mr-[20px] flex w-[85px] items-center pl-1">
              <Arrow dir="left" label="命令向左滚动" className="w-[18px]" />
              <ThumbH />
              <div className="flex-1" />
              <Arrow dir="right" label="命令向右滚动" className="w-[22px]" />
            </div>
          </div>
        </div>
      </div>
    </section>
  );
}

function WorkspaceWindow() {
  return (
    <section className="absolute top-[108px] left-[539px] h-[66px] w-[240px] rounded-[7px] border-2 border-[#999] bg-[linear-gradient(#d9f2f7_0%,#e8fbfd_12%,#4a4f53_50%,#1b1b1d_100%)] px-[5px] pt-[5px]">
      <div className="border-2 border-white bg-[#f0f0f0] outline outline-[#333]">
        <div className="flex h-[21px] items-center justify-between bg-[#99b4d1] pl-px">
          <h2 className={`text-[15px] leading-[20px] text-black ${ui}`}>工作空间</h2>
          <button type="button" aria-label="关闭工作空间" className="mr-[2px] flex h-[17px] w-[19px] items-center justify-center border border-t-white border-r-[#666] border-b-[#666] border-l-white bg-[#f6f6f6]">
            <svg viewBox="0 0 10 10" className="h-[10px] w-[10px]" stroke="#000" strokeWidth="1.500" aria-hidden="true">
              <path d="M0 0l10 10M10 0L0 10" />
            </svg>
          </button>
        </div>
        <div className="flex h-[29px] items-center">
          <Combo label="工作空间" value="AutoCAD 默认" width="w-[175px]" lead={<span className="w-px" />} />
          <Tool name="工作空间设置" />
          <Tool name="我的工作空间" />
        </div>
      </div>
    </section>
  );
}

function Palette() {
  return (
    <section className="absolute top-[102px] left-[771px] flex">
      <div className={`flex w-[29px] flex-col pt-px text-[15px] text-black ${ui}`}>
        {paletteTabs.map((t, i) => (
          <button
            key={t}
            type="button"
            className={`flex h-[81px] items-center justify-center rounded-l-[4px] border-b-2 border-l border-[#a0a0a0] bg-[#ebebeb] ${i === 0 ? "font-bold" : "border-r-2"}`}
          >
            <span className="-rotate-90 leading-[18px] whitespace-nowrap">{t}</span>
          </button>
        ))}
      </div>
      <div className="flex h-[607px] w-[167px] border-r-2 border-b-2 border-[#7a7a7a] bg-[#ebebeb] [clip-path:polygon(0_0,100%_0,100%_100%,13px_100%,0_594px)]">
        <div className="mt-2 mb-[11px] ml-2 flex-1 bg-white" />
        <div className="flex w-[26px] flex-col items-center bg-[#99b4d1] pt-1 pb-[4px]">
          <button type="button" aria-label="关闭选项板">
            <svg viewBox="0 0 16 16" className="h-4 w-4" stroke="#000" strokeWidth="2.400" aria-hidden="true">
              <path d="M2 2l12 12M14 2L2 14" />
              <path d="M1 2h3M12 2h3M1 14h3M12 14h3" strokeWidth="2" />
            </svg>
          </button>
          <div className="flex-1" />
          <div className="flex h-[166px] items-center justify-center">
            <h2 className={`-rotate-90 text-[15px] leading-[20px] whitespace-nowrap text-black ${ui}`}>工具选项板 - 所有选项板</h2>
          </div>
          <button type="button" aria-label="自动隐藏" className="mt-3">
            <svg viewBox="0 0 18 16" className="h-4 w-[18px]" aria-hidden="true">
              <path d="M0 8l6-6v12zM8 2l6 6-6 6zM16 0h2v16h-2z" />
            </svg>
          </button>
          <button type="button" aria-label="选项板特性" className="mt-[7px]">
            <svg viewBox="0 0 18 18" className="h-[18px] w-[18px]" fill="none" stroke="#000" aria-hidden="true">
              <path d="M0 1h18M1 5v12h14" strokeWidth="2" />
              <path d="M16.500 4v14" strokeWidth="3" />
              <path d="M4 6.500h9M4 9.500h9M4 12.500h9M4 5v10M0 5h6" strokeWidth="1.500" />
            </svg>
          </button>
        </div>
      </div>
    </section>
  );
}

const watermarkSpots = ["left-[767px]", "left-[955px]", "left-[1148px]"];

export default function App() {
  return (
    <div className="relative h-screen overflow-hidden bg-[#0b1a33] p-px">
      <Defs />
      <div className="flex h-full flex-col overflow-hidden rounded-[7px] border-t border-[#b9c8da]">
        <TitleBar />
        <div className="flex min-h-0 flex-1">
          <div className="w-[8px] shrink-0 border-r-2 border-l border-r-[#1e3452] border-l-[#b9cbe0] bg-[linear-gradient(180deg,#7d9cc4_0px,#4769a4_75px,#c8d2e2_246px,#1d559a_247px,#2b93d3_100%)]" />
          <main className="flex min-w-0 flex-1 flex-col bg-[#f0f0f0]">
            <MenuBar />
            <Toolbars />
            <div className="flex min-h-0 flex-1">
              <div className="w-[26px] shrink-0">
                <VToolbar tools={drawTools} text />
              </div>
              <div className="flex min-w-0 flex-1 flex-col border-t-2 border-l-2 border-[#868686]">
                <div className="flex min-h-0 flex-1">
                  <div className="relative flex-1 bg-black">
                    <Ucs />
                  </div>
                  <div className="flex w-[21px] flex-col items-center bg-[#f0f0f0]">
                    <Arrow dir="up" label="向上滚动" className="h-[22px] w-[20px]" />
                    <div className="flex h-[19px] w-[19px] flex-col items-center justify-center gap-[2px] rounded-[2px] border border-[#979797] bg-[linear-gradient(90deg,#f6f6f6,#cfcfcf)]">
                      <span className="h-[2px] w-2 bg-[#777]" />
                      <span className="h-[2px] w-2 bg-[#777]" />
                      <span className="h-[2px] w-2 bg-[#777]" />
                    </div>
                    <div className="flex-1" />
                    <Arrow dir="down" label="向下滚动" className="h-[22px] w-[20px]" />
                  </div>
                </div>
                <LayoutRow />
              </div>
              <div className="ml-[2px] w-[26px] shrink-0 border-l border-white">
                <VToolbar tools={modifyTools} />
                <VToolbar tools={orderTools} />
              </div>
            </div>
            <CommandPane />
            <footer className={`flex h-[25px] shrink-0 items-center justify-between border-t border-[#a0a0a0] bg-[#f0eded] ${mono}`}>
              <div className="mt-[2px] flex h-[22px] flex-1 items-center justify-between border-t border-[#8c8c8c] pr-[2px] pl-[7px]">
                <p className="pt-[3px] text-[13px] leading-[18px] whitespace-pre text-black">
                  <span className="text-[15px]">正在打开</span>
                  {": C:\\Users\\Administrator\\AppData\\Local\\Autodesk\\AutoCAD 2006\\R16.2\\chs\\Template\\acadiso.dwt"}
                </p>
                <svg viewBox="0 0 12 12" className="h-3 w-3 self-end fill-[#a0a0a0]" aria-hidden="true">
                  <path d="M9 1h2v2H9zM9 5h2v2H9zM5 5h2v2H5zM9 9h2v2H9zM5 9h2v2H5zM1 9h2v2H1z" />
                </svg>
              </div>
            </footer>
          </main>
          <div className="w-[8px] shrink-0 border-r border-l-2 border-r-[#b9cbe0] border-l-[#1e3452] bg-[linear-gradient(180deg,#8ba0b8_0px,#46658e_120px,#c3cddd_246px,#1a4a84_247px,#1d4f8d_100%)]" />
        </div>
        <div className="h-[7px] shrink-0 border-t-2 border-b border-t-[#1e4a70] border-b-[#a5c8e4] bg-[linear-gradient(90deg,#2a86c8_0%,#4aaade_18%,#2f95d2_30%,#2b8acb_55%,#2479bd_64%,#6cb4e6_68%,#2472b4_72%,#1f5c9e_90%,#1d4f8d_100%)]" />
      </div>

      <div className="absolute top-[26px] right-[105px] flex h-[25px] w-[104px] overflow-hidden rounded-[4px] border border-[#1e9bff] bg-[linear-gradient(#eaf8ff,#c4ecff)]">
        <div className="flex w-[29px] items-center justify-center bg-[#22a2fb]">
          <svg viewBox="0 0 20 16" className="h-4 w-5" fill="none" stroke="#fff" strokeWidth="2.500" aria-hidden="true">
            <circle cx="10" cy="5" r="3.600" />
            <circle cx="5" cy="11" r="3.600" />
            <circle cx="15" cy="11" r="3.600" />
          </svg>
        </div>
        <button type="button" className={`pb-[3px] pl-[7px] text-[12px] leading-[18px] text-[#4aaef5] ${ui}`}>拖拽上传</button>
      </div>

      <WorkspaceWindow />
      <Palette />

      {watermarkSpots.map((spot) => (
        <p
          key={spot}
          className={`pointer-events-none absolute top-[499px] -translate-x-1/2 -translate-y-1/2 rotate-[-36deg] text-[25px] leading-[30px] whitespace-nowrap text-[rgba(178,178,178,0.38)] ${spot} ${ui}`}
        >
          小小软件迷 www.xxrjm.com
        </p>
      ))}
    </div>
  );
}
